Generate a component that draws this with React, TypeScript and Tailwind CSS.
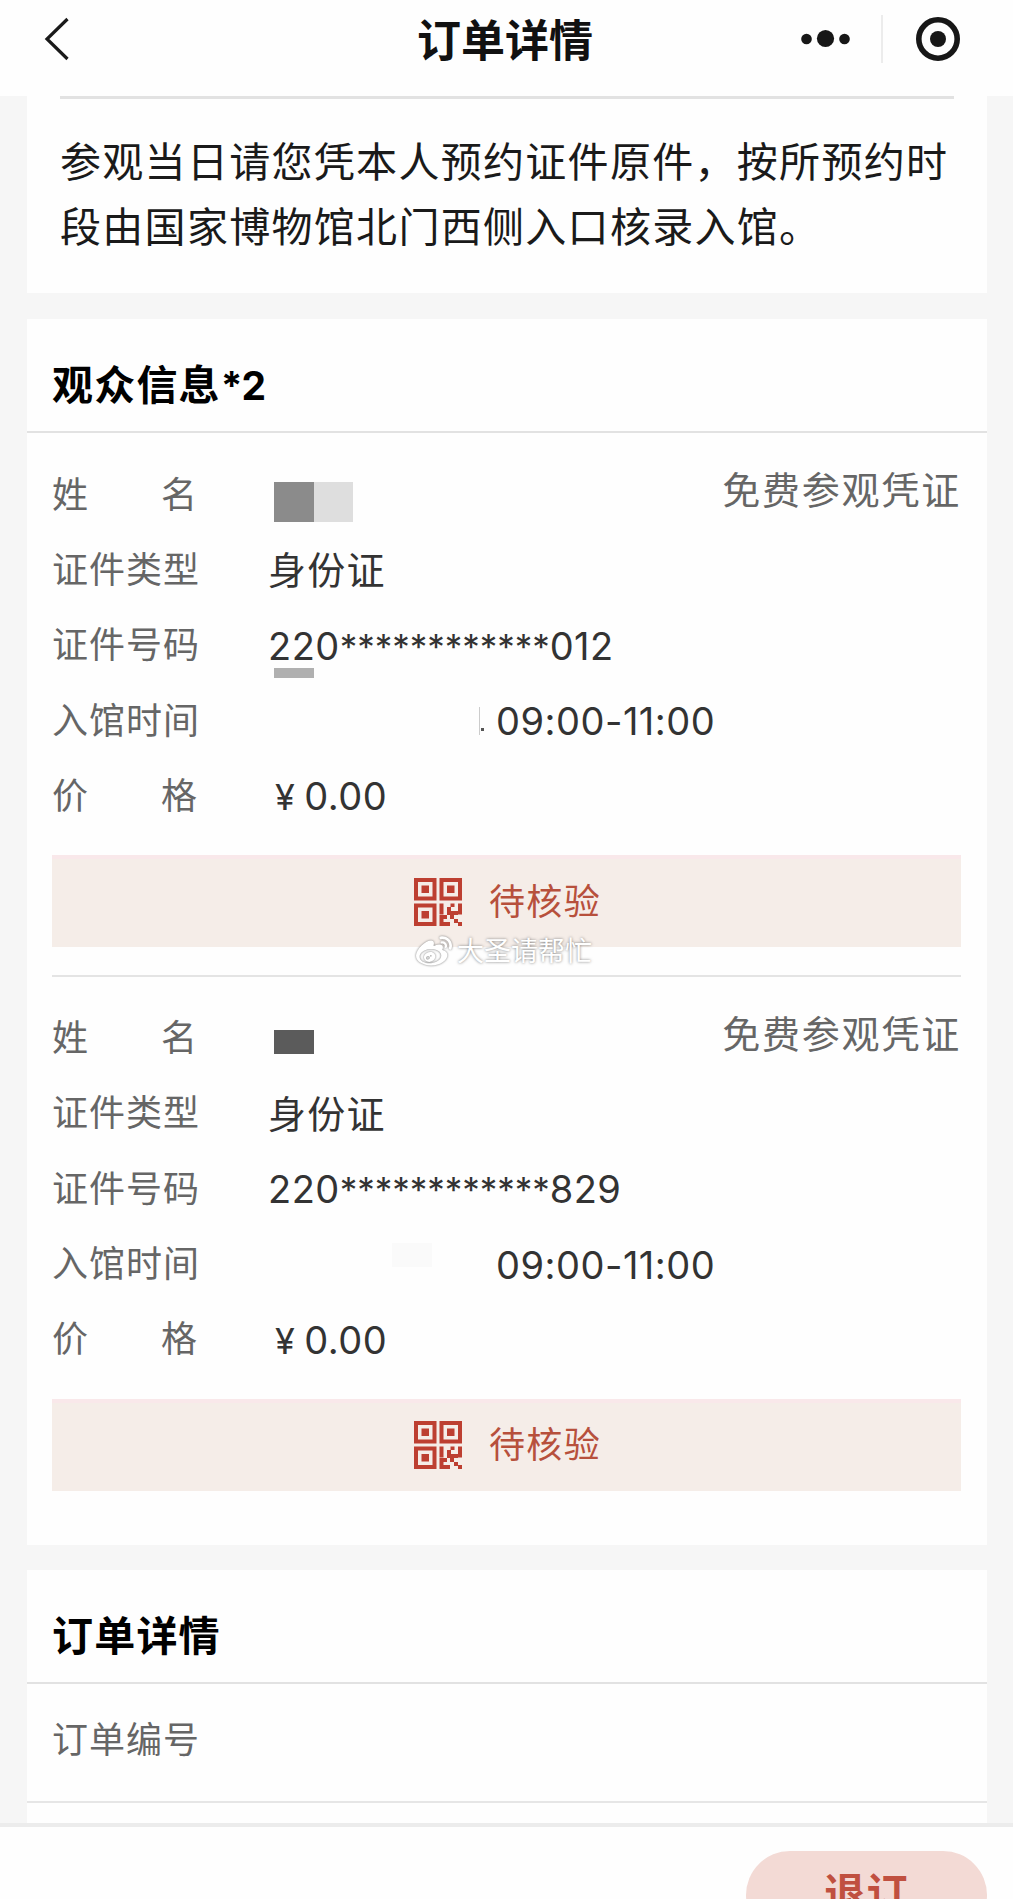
import { FaWeibo } from "react-icons/fa";

const labelClass = "w-[216px] shrink-0 text-[36px] tracking-[1px] text-[#666]";
const valueClass = "mt-[2px] text-[38px] tracking-[0.5px] text-[#333]";

type Visitor = {
  idPrefix: string;
  idSuffix: string;
  session: string;
  price: string;
};

const visitors: Visitor[] = [
  { idPrefix: "220", idSuffix: "012", session: "09:00-11:00", price: "0.00" },
  { idPrefix: "220", idSuffix: "829", session: "09:00-11:00", price: "0.00" },
];

const QrIcon = () => (
  <svg width="48" height="48" viewBox="0 0 48 48" fill="none">
    <g stroke="#bd3f31" strokeWidth="4">
      <rect x="2" y="2" width="18.5" height="18.5" />
      <rect x="27.5" y="2" width="18.5" height="18.5" />
      <rect x="2" y="27.5" width="18.5" height="18.5" />
    </g>
    <g fill="#bd3f31">
      <rect x="7.5" y="7.5" width="7.5" height="7.5" />
      <rect x="33" y="7.5" width="7.5" height="7.5" />
      <rect x="7.5" y="33" width="7.5" height="7.5" />
      <path d="M25.5 25.5h4v11h-4zM36.5 25.5h4v3.5h-4zM44 25.5h4v11h-4zM33 29h4v4h7v4h-4v4h4v3h4v4h-4v-3h-4v-4h-4v-4h-3zM25.5 37h7.5v4h-3.5v3h6.5v4h-10.5z" />
    </g>
  </svg>
);

const Label = ({ text }: { text: string }) =>
  text.length === 2 ? (
    <span className={labelClass}>
      <span className="flex w-[146px] justify-between">
        <span>{text[0]}</span>
        <span>{text[1]}</span>
      </span>
    </span>
  ) : (
    <span className={labelClass}>{text}</span>
  );

const VisitorInfo = ({ visitor, first }: { visitor: Visitor; first: boolean }) => (
  <div>
    <div className="flex h-[75.3px] items-center">
      <Label text="姓名" />
      {first ? (
        <span className="ml-[6px] mt-[14px] flex">
          <span className="h-10 w-10 bg-[#8b8b8b]" />
          <span className="h-10 w-[39px] bg-[#dedede]" />
        </span>
      ) : (
        <span className="ml-[6px] mt-[8px] h-6 w-10 bg-[#5b5b5b]" />
      )}
      <span className="-mt-[8px] ml-auto text-[38px] tracking-[1.8px] text-[#666]">免费参观凭证</span>
    </div>
    <div className="flex h-[75.3px] items-center">
      <Label text="证件类型" />
      <span className="mt-[2px] text-[38px] tracking-[1.2px] text-[#333]">身份证</span>
    </div>
    <div className="relative flex h-[75.3px] items-center">
      <Label text="证件号码" />
      <span className={valueClass}>
        {visitor.idPrefix}
        <span className="text-[35px] tracking-[-0.05px]">************</span>
        {visitor.idSuffix}
      </span>
      {first && <span className="absolute bottom-[5px] left-[222px] h-[10px] w-10 bg-[#b0b0b0]" />}
    </div>
    <div className="flex h-[75.3px] items-center">
      <Label text="入馆时间" />
      {first ? (
        <span className="ml-[211px] flex h-7 w-[17px] items-end border-l border-[#ccc] pb-1">
          <span className="ml-[1px] h-[3px] w-[3px] bg-[#555]" />
        </span>
      ) : (
        <span className="-mt-[18px] ml-[124px] mr-[64px] h-6 w-10 bg-[#fafafa]" />
      )}
      <span className={valueClass}>{visitor.session}</span>
    </div>
    <div className="flex h-[75.3px] items-center">
      <Label text="价格" />
      <span className={valueClass}>
        <span className="ml-[7px] mr-[9px] text-[36px]">¥</span>
        {visitor.price}
      </span>
    </div>
    <div className="mt-[22px] flex h-[92px] w-[909px] items-center justify-center border-t-4 border-[#f9e8ea] bg-[#f5ede8] pb-[3px] pl-[2px]">
      <QrIcon />
      <span className="ml-[27px] text-[36px] tracking-[1.3px] text-[#b7503c]">待核验</span>
    </div>
  </div>
);

const App = () => {
  return (
    <div className="flex h-[1899px] w-[1013px] flex-col overflow-hidden bg-[#f6f6f6] font-[Inter,'Noto_Sans_CJK_SC',sans-serif]">
      <header className="flex h-24 shrink-0 items-start bg-[#fefefe]">
        <svg className="ml-[44px] mt-[17px]" width="26" height="44" viewBox="0 0 26 44" fill="none">
          <path d="M23.5 2 3 22 23.5 42" stroke="#1a1a1a" strokeWidth="3.2" />
        </svg>
        <h1 className="ml-[347px] mt-[8px] text-[44px] font-bold leading-[66px] text-[#111]">订单详情</h1>
        <div className="ml-[207px] mt-[14px] flex w-[160px] items-center">
          <svg width="50" height="50" viewBox="0 0 50 50" fill="#171717">
            <circle cx="6.5" cy="25" r="5.3" />
            <circle cx="25.5" cy="24.5" r="8.6" />
            <circle cx="44.5" cy="25" r="5.3" />
          </svg>
          <span className="ml-[31px] h-12 w-[2px] bg-[#ececec]" />
          <svg className="ml-[33px]" width="44" height="44" viewBox="0 0 44 44">
            <circle cx="22" cy="22" r="19.2" fill="none" stroke="#171717" strokeWidth="5.6" />
            <circle cx="22" cy="22" r="8" fill="#171717" />
          </svg>
        </div>
      </header>

      <section className="ml-[27px] h-[197px] w-[960px] shrink-0 bg-[#fefefe] px-[33px]">
        <div className="h-[3px] w-[894px] bg-[#e2e2e2]" />
        <p className="mt-[31px] w-[900px] text-[41px] leading-[65px] tracking-[1.3px] text-[#1a1a1a]">
          参观当日请您凭本人预约证件原件，按所预约时段由国家博物馆北门西侧入口核录入馆。
        </p>
      </section>

      <section className="relative ml-[27px] mt-[26px] h-[1226px] w-[960px] shrink-0 bg-[#fefefe]">
        <div className="flex h-[114px] items-center border-b-2 border-[#e2e2e2] px-[25px] pt-[21px]">
          <h2 className="text-[41px] font-bold tracking-[1.2px] text-black">
            观众信息<span className="text-[39px] tracking-[-1px]">*2</span>
          </h2>
        </div>
        <div className="pl-[25px] pr-[26px]">
          <div className="pt-[24px]">
            <VisitorInfo visitor={visitors[0]} first />
          </div>
          <div className="mt-[28px] border-t-2 border-[#e4e4e4] pt-[23px]">
            <VisitorInfo visitor={visitors[1]} first={false} />
          </div>
        </div>
        <div className="absolute left-[389px] top-[613px] flex items-center text-white">
          <FaWeibo className="h-9 w-9 drop-shadow-[0_0_1px_#777]" />
          <span className="ml-[5px] text-[27px] leading-10 [text-shadow:0_0_3px_#777]">大圣请帮忙</span>
        </div>
      </section>

      <section className="ml-[27px] mt-[25px] h-[253px] w-[960px] shrink-0 bg-[#fefefe]">
        <div className="flex h-[114px] items-center border-b-2 border-[#e2e2e2] px-[25px] pt-[21px]">
          <h2 className="text-[41px] font-bold tracking-[1.2px] text-black">订单详情</h2>
        </div>
        <div className="flex h-[119px] items-center border-b-2 border-[#e6e6e6] px-[25px] pb-[5px]">
          <Label text="订单编号" />
        </div>
      </section>

      <footer className="flex h-[80px] shrink-0 justify-end border-t-4 border-[#ececec] bg-[#fefefe] pr-[26px] pt-[24px]">
        <button className="flex h-[88px] w-[241px] shrink-0 items-center justify-center rounded-full bg-[#f3dad5] pb-[3px] text-[41px] font-bold tracking-[1.2px] text-[#c05040]">
          退订
        </button>
      </footer>
    </div>
  );
};

export default App;
